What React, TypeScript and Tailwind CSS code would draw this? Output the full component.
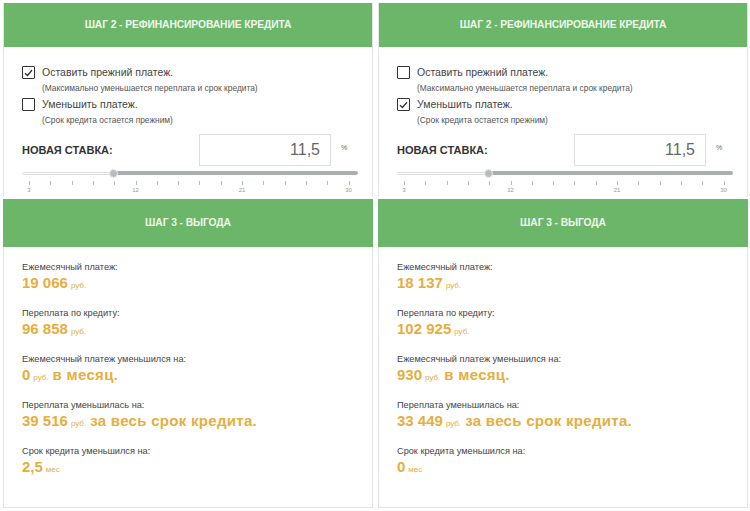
import React from "react";

type Step2Props = { keepPayment: boolean };

type Result = { label: string; value: string; unit: string; tail?: string };

function Checkbox({ checked }: { checked: boolean }) {
  return (
    <div className="w-[13px] h-[13px] border border-[#333] rounded-[1px] bg-white flex items-center justify-center shrink-0">
      {checked && (
        <svg width="9" height="8" viewBox="0 0 9 8">
          <path d="M1 4.2 L3.4 6.5 L8 1.2" fill="none" stroke="#333" strokeWidth="1.3" />
        </svg>
      )}
    </div>
  );
}

function Option({ checked, title, hint }: { checked: boolean; title: string; hint: string }) {
  return (
    <div className="flex gap-[7px]">
      <Checkbox checked={checked} />
      <div className="flex flex-col">
        <span className="text-[10.5px] leading-[13px] text-[#444]">{title}</span>
        <span className="text-[8.4px] leading-[10px] mt-[4px] text-[#555]">{hint}</span>
      </div>
    </div>
  );
}

function Slider() {
  const ticks = Array.from({ length: 16 }, (_, i) => i);
  const labels = [
    { v: "3", i: 0 },
    { v: "12", i: 5 },
    { v: "21", i: 10 },
    { v: "30", i: 15 },
  ];
  return (
    <div className="relative h-[28px] w-[336px]">
      <div className="absolute left-0 top-[3px] h-[3px] w-[90px] border border-[#ddd] rounded-full bg-white" />
      <div className="absolute left-[92px] right-0 top-[2px] h-[4px] bg-[#a9aeb0] rounded-full" />
      <div className="absolute left-[87px] top-0 w-[9px] h-[9px] rounded-full bg-[#b8bcbe] border border-[#eee]" />
      {ticks.map((i) => (
        <div
          key={i}
          className="absolute top-[12px] w-px h-[4px] bg-[#bbb]"
          style={{ left: 7 + i * 21.3 }}
        />
      ))}
      {labels.map((l) => (
        <span
          key={l.v}
          className="absolute top-[17px] text-[6px] leading-[8px] text-[#999] -translate-x-1/2"
          style={{ left: 7 + l.i * 21.3 }}
        >
          {l.v}
        </span>
      ))}
    </div>
  );
}

function Header({ children }: { children: React.ReactNode }) {
  return (
    <div className="h-[48px] bg-[#6cb66a] flex items-center justify-center text-[10.3px] font-bold text-[#eef7ea] tracking-[-0.1px]">
      {children}
    </div>
  );
}

function Step2({ keepPayment }: Step2Props) {
  return (
    <div className="h-[194px] border-x border-[#e4e4e4] flex flex-col">
      <Header>ШАГ 2 - РЕФИНАНСИРОВАНИЕ КРЕДИТА</Header>
      <div className="flex flex-col pl-[18px] pt-[19px]">
        <Option
          checked={keepPayment}
          title="Оставить прежний платеж."
          hint="(Максимально уменьшается переплата и срок кредита)"
        />
        <div className="h-[5px]" />
        <Option checked={!keepPayment} title="Уменьшить платеж." hint="(Срок кредита остается прежним)" />
        <div className="flex items-center mt-[9px] h-[32px]">
          <span className="w-[177px] text-[11px] font-bold text-[#333]">НОВАЯ СТАВКА:</span>
          <div className="w-[132px] h-[32px] border border-[#ddd] flex items-center justify-end pr-[10px] text-[16px] text-[#666]">
            11,5
          </div>
          <span className="ml-[10px] text-[7px] text-[#666] -mt-[4px]">%</span>
        </div>
        <div className="mt-[3px]">
          <Slider />
        </div>
      </div>
    </div>
  );
}

function Step3({ results }: { results: Result[] }) {
  return (
    <div className="flex-1 flex flex-col mt-[2px]">
      <Header>ШАГ 3 - ВЫГОДА</Header>
      <div className="flex-1 border border-t-0 border-[#e4e4e4] pl-[18px] pt-[14px] flex flex-col gap-[13px]">
        {results.map((r) => (
          <div key={r.label} className="flex flex-col">
            <span className="text-[9.2px] leading-[12px] text-[#444]">{r.label}</span>
            <div className="flex items-baseline mt-[1px] mb-[2px] text-[#e6ae3e]">
              <span className="text-[15px] leading-[18px] font-bold">{r.value}</span>
              <span className="text-[8px] ml-[3px]">{r.unit}</span>
              {r.tail && <span className="text-[15px] leading-[18px] font-bold ml-[4px] tracking-[0.3px]">{r.tail}</span>}
            </div>
          </div>
        ))}
      </div>
    </div>
  );
}

const left: Result[] = [
  { label: "Ежемесячный платеж:", value: "19 066", unit: "руб." },
  { label: "Переплата по кредиту:", value: "96 858", unit: "руб." },
  { label: "Ежемесячный платеж уменьшился на:", value: "0", unit: "руб.", tail: "в месяц." },
  { label: "Переплата уменьшилась на:", value: "39 516", unit: "руб.", tail: "за весь срок кредита." },
  { label: "Срок кредита уменьшился на:", value: "2,5", unit: "мес" },
];

const right: Result[] = [
  { label: "Ежемесячный платеж:", value: "18 137", unit: "руб." },
  { label: "Переплата по кредиту:", value: "102 925", unit: "руб." },
  { label: "Ежемесячный платеж уменьшился на:", value: "930", unit: "руб.", tail: "в месяц." },
  { label: "Переплата уменьшилась на:", value: "33 449", unit: "руб.", tail: "за весь срок кредита." },
  { label: "Срок кредита уменьшился на:", value: "0", unit: "мес" },
];

export default function App() {
  return (
    <div
      className="w-[750px] h-[511px] bg-white flex gap-[5px] pt-[3px] pb-[3px] pl-[3px] overflow-hidden"
      style={{ fontFamily: '"Liberation Sans", Arial, sans-serif' }}
    >
      {[
        { keep: true, res: left },
        { keep: false, res: right },
      ].map((c, i) => (
        <div key={i} className="w-[370px] flex flex-col">
          <Step2 keepPayment={c.keep} />
          <Step3 results={c.res} />
        </div>
      ))}
    </div>
  );
}
